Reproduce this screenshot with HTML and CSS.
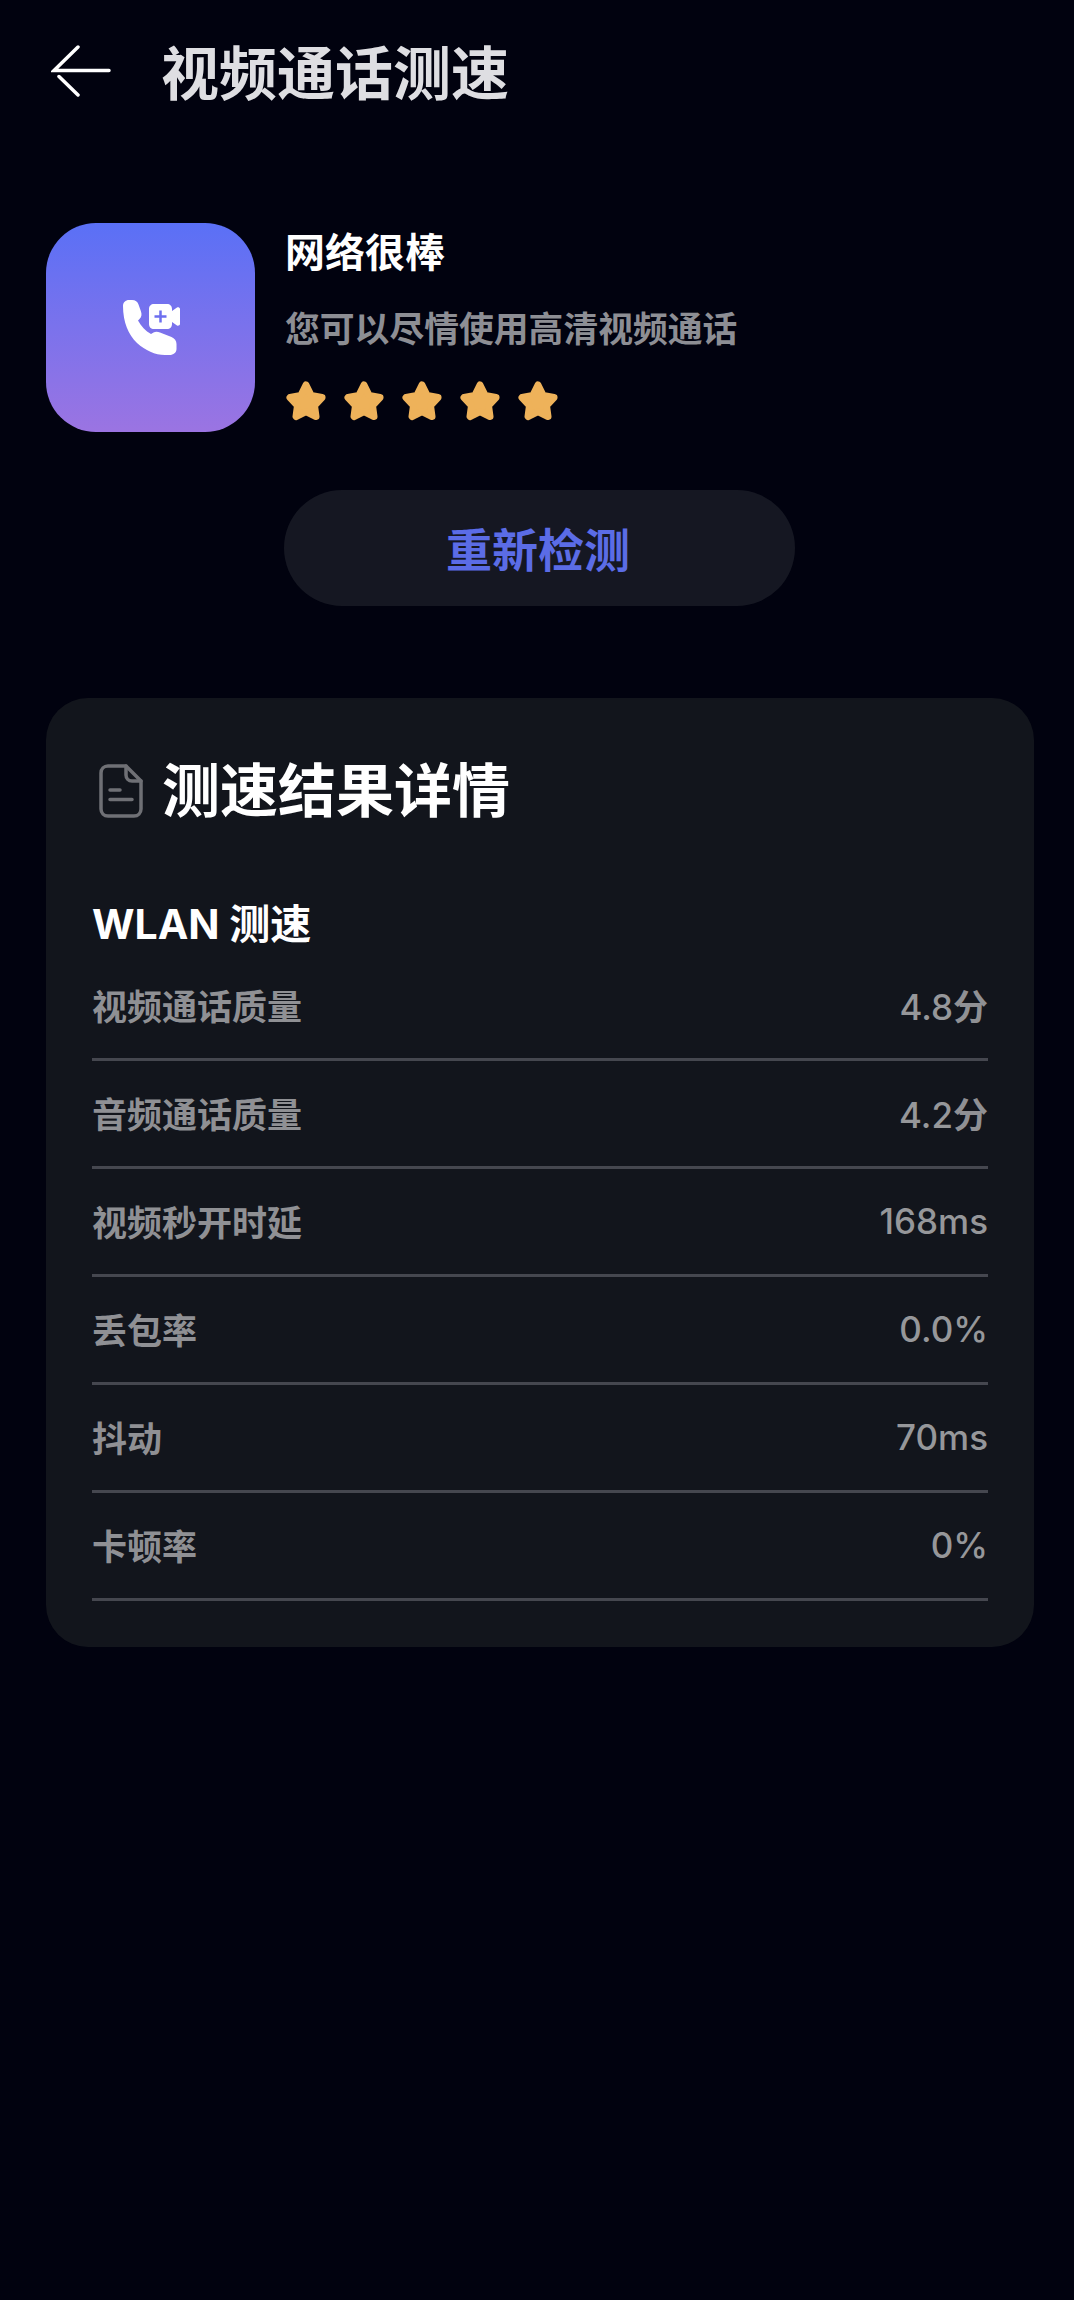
FILE: index.html
```html
<!DOCTYPE html>
<html lang="zh-CN">
<head>
<meta charset="utf-8">
<title>视频通话测速</title>
<link rel="stylesheet" href="styles.css">
</head>
<body>
<main class="page">
  <header class="topbar">
    <svg class="back" viewBox="0 0 60 52" aria-hidden="true">
      <path d="M27 2 3 25.500H58" />
      <path d="M8 31.500 27 50" />
    </svg>
    <h1 class="title">视频通话测速</h1>
  </header>

  <section class="summary">
    <div class="app-icon">
      <svg class="call-icon" viewBox="0 0 58 55" aria-hidden="true">
        <path class="solid" d="M1 6C1 2.500 3.500 0 7 0H10C13.500 0 15.500 1.500 16.500 4.500L19 11.500C20 15 19.500 17 17.500 19L16 20.500C19 26 23.500 31 29 34L31.500 32.500C33.500 31.500 35.500 31.500 38 32.500L49.500 37C52.500 38.500 54.500 40.500 54.500 44V49C54.500 52.500 51.500 55 47.500 55H43C33 55 23.500 50.500 15 43C6.500 35 1 22 1 6Z"/>
        <path class="solid" d="M27 9C27 6 29 4 32 4H45C48 4 50 6 50 9V11L55 7.500C56 7 58 7.500 58 9V24C58 25.500 56 26 55 25.500L50 22V24C50 27 48 29 45 29H32C29 29 27 27 27 24Z"/>
        <path class="plus" d="M38.500 10.500V22.500M32.500 16.500H44.500"/>
      </svg>
    </div>
    <div class="summary-text">
      <h2 class="verdict">网络很棒</h2>
      <p class="verdict-note">您可以尽情使用高清视频通话</p>
      <div class="stars">
        <svg class="star" viewBox="0 0 40 40" aria-hidden="true"><path d="M20 4 25.200 14.500 36 16.500 28.500 24.500 30 35.500 20 30.500 10 35.500 11.500 24.500 4 16.500 14.800 14.500Z"/></svg>
        <svg class="star" viewBox="0 0 40 40" aria-hidden="true"><path d="M20 4 25.200 14.500 36 16.500 28.500 24.500 30 35.500 20 30.500 10 35.500 11.500 24.500 4 16.500 14.800 14.500Z"/></svg>
        <svg class="star" viewBox="0 0 40 40" aria-hidden="true"><path d="M20 4 25.200 14.500 36 16.500 28.500 24.500 30 35.500 20 30.500 10 35.500 11.500 24.500 4 16.500 14.800 14.500Z"/></svg>
        <svg class="star" viewBox="0 0 40 40" aria-hidden="true"><path d="M20 4 25.200 14.500 36 16.500 28.500 24.500 30 35.500 20 30.500 10 35.500 11.500 24.500 4 16.500 14.800 14.500Z"/></svg>
        <svg class="star" viewBox="0 0 40 40" aria-hidden="true"><path d="M20 4 25.200 14.500 36 16.500 28.500 24.500 30 35.500 20 30.500 10 35.500 11.500 24.500 4 16.500 14.800 14.500Z"/></svg>
      </div>
    </div>
  </section>

  <div class="retest-wrap"><button class="retest" type="button">重新检测</button></div>

  <section class="card">
    <div class="card-head">
      <svg class="doc" viewBox="0 0 44 54" aria-hidden="true">
        <path d="M27 2H9C5 2 2 5 2 9V45C2 49 5 52 9 52H35C39 52 42 49 42 45V17Z"/>
        <path d="M27 2V11C27 14.500 29.500 17 33 17H42"/>
        <path d="M11 26H21M11 35.500H33"/>
      </svg>
      <h2 class="card-title">测速结果详情</h2>
    </div>
    <h3 class="section-name">WLAN 测速</h3>
    <ul class="rows">
      <li class="row"><span>视频通话质量</span><span class="value">4.8<span class="unit">分</span></span></li>
      <li class="row"><span>音频通话质量</span><span class="value">4.2<span class="unit">分</span></span></li>
      <li class="row"><span>视频秒开时延</span><span class="value">168ms</span></li>
      <li class="row"><span>丢包率</span><span class="value">0.0%</span></li>
      <li class="row"><span>抖动</span><span class="value">70ms</span></li>
      <li class="row"><span>卡顿率</span><span class="value">0%</span></li>
    </ul>
  </section>
</main>
</body>
</html>
```
FILE: styles.css
```css
* { box-sizing: border-box; }
html, body { margin: 0; padding: 0; }
body {
  background: #01020f;
  font-family: Inter, "Noto Sans CJK SC", sans-serif;
  color: #fff;
  min-height: 2300px;
}
h1, h2, h3, p, ul { margin: 0; padding: 0; }
ul { list-style: none; }

.page { padding: 0 40px 0 46px; }

.topbar {
  display: flex;
  align-items: center;
  height: 148px;
  padding-left: 5px;
}
.back {
  width: 60px;
  height: 52px;
  flex: none;
  margin: -6px 51px 0 0;
  fill: none;
  stroke: #fff;
  stroke-width: 3.500;
  stroke-linecap: round;
  stroke-linejoin: miter;
}
.title {
  font-size: 58px;
  line-height: 68px;
  font-weight: 700;
  color: #dedee2;
  margin-top: -1px;
  margin-left: -1px;
}

.summary {
  display: flex;
  margin-top: 75px;
}
.app-icon {
  width: 209px;
  height: 209px;
  flex: none;
  border-radius: 50px;
  background: linear-gradient(180deg, #5a70f6 0%, #9b74e2 100%);
  display: flex;
  align-items: center;
  justify-content: center;
}
.call-icon { width: 58px; height: 55px; margin-top: -1px; }
.solid { fill: #fff; }
.plus { fill: none; stroke: #6d6fef; stroke-width: 2.500; }

.summary-text { margin-left: 30px; }
.verdict {
  font-size: 40px;
  line-height: 50px;
  font-weight: 700;
  color: #fff;
  margin-top: 5px;
}
.verdict-note {
  font-size: 34.800px;
  line-height: 48px;
  font-weight: 700;
  color: #8d8e94;
  margin-top: 27px;
}
.stars {
  display: flex;
  gap: 18px;
  margin-top: 28px;
  padding-left: 1px;
}
.star {
  width: 40px;
  height: 40px;
  fill: #eeb25a;
  stroke: #eeb25a;
  stroke-width: 7;
  stroke-linejoin: round;
}

.retest-wrap { margin-top: 58px; padding-left: 238px; }
.retest {
  display: block;
  width: 511px;
  height: 116px;
  border: 0;
  border-radius: 58px;
  padding: 0 3px 2px 0;
  background: #151722;
  color: #5b6ce6;
  font-family: inherit;
  font-size: 46px;
  font-weight: 700;
}

.card {
  margin-top: 92px;
  width: 988px;
  height: 949px;
  border-radius: 42px;
  background: #12151c;
  padding: 59px 46px 0;
}
.card-head {
  display: flex;
  align-items: center;
  height: 68px;
  padding-left: 7px;
}
.doc {
  width: 44px;
  height: 54px;
  flex: none;
  margin-right: 19px;
  fill: none;
  stroke: #6f7075;
  stroke-width: 3.500;
  stroke-linecap: round;
  stroke-linejoin: round;
}
.card-title {
  font-size: 58px;
  line-height: 68px;
  font-weight: 700;
  color: #fff;
}
.section-name {
  margin-top: 74px;
  font-size: 41px;
  line-height: 50px;
  font-weight: 700;
  color: #fff;
}
.rows { margin-top: 4px; }
.row {
  display: flex;
  justify-content: space-between;
  align-items: center;
  height: 108px;
  padding-bottom: 2px;
  border-bottom: 3px solid #45474f;
  font-size: 35px;
  font-weight: 700;
  color: #8f9094;
}
.value { font-weight: 500; color: #96979a; }
.unit { font-weight: 700; color: #8f9094; }
```
